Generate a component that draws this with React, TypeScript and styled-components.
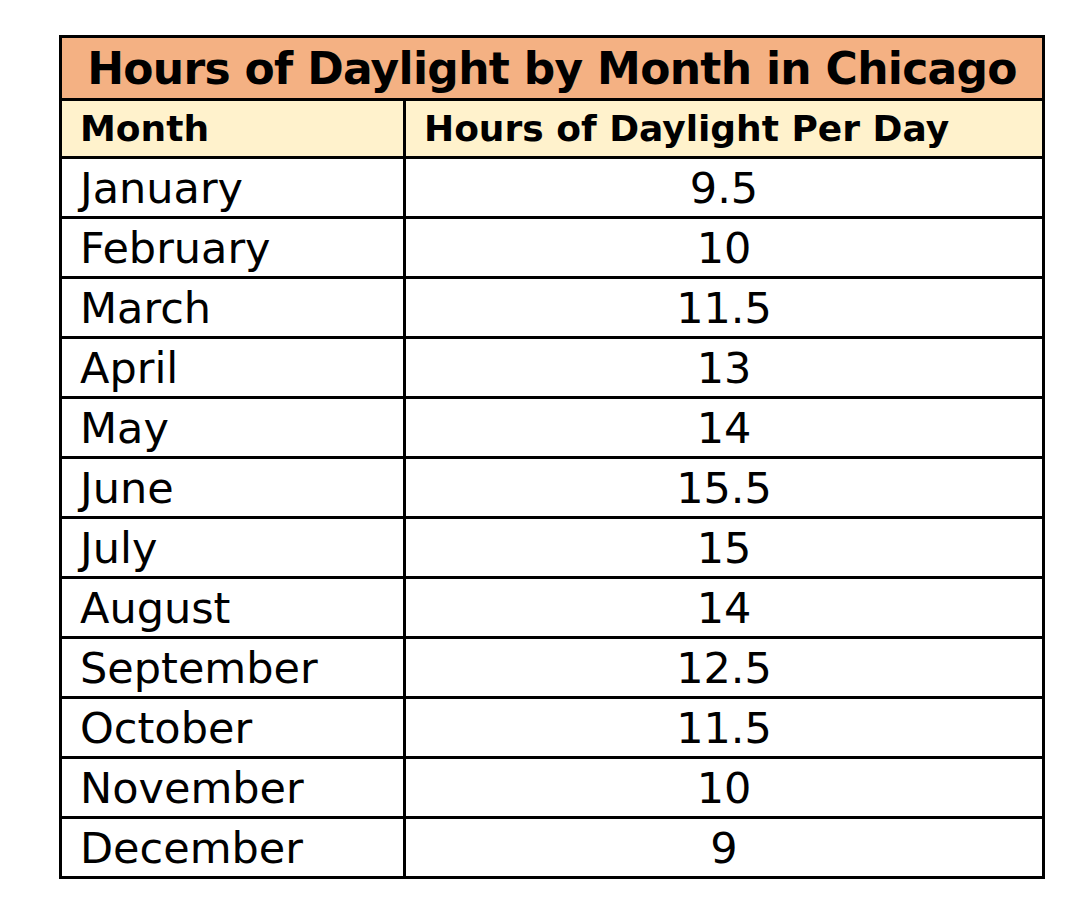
import styled, { createGlobalStyle } from "styled-components";

const GlobalStyle = createGlobalStyle`
  body {
    margin: 0;
    background: #ffffff;
    font-family: "DejaVu Sans", sans-serif;
    color: #000000;
  }
`;

const Styled_Page = styled.div`
  padding: 35px 0 0 59px;
`;

const Styled_Table = styled.table`
  border-collapse: collapse;
  width: 986px;
  table-layout: fixed;
  border: 3px solid #000;
`;

const Styled_TitleCell = styled.th`
  background-color: #f4b183;
  height: 60px;
  padding: 0;
  font-size: 44px;
  letter-spacing: -0.7px;
  font-weight: bold;
  text-align: center;
  border-bottom: 3px solid #000;
`;

const Styled_HeadCell = styled.th`
  background-color: #fff2cc;
  height: 55px;
  padding: 0 0 0 18px;
  font-size: 36px;
  font-weight: bold;
  text-align: left;
  border: 3px solid #000;
`;

const Styled_Cell = styled.td<{ $center?: boolean }>`
  height: 57px;
  padding: ${(p) => (p.$center ? "0" : "0 0 0 18px")};
  font-size: 43px;
  text-align: ${(p) => (p.$center ? "center" : "left")};
  border: 3px solid #000;
`;

const rows: [string, string][] = [
  ["January", "9.5"],
  ["February", "10"],
  ["March", "11.5"],
  ["April", "13"],
  ["May", "14"],
  ["June", "15.5"],
  ["July", "15"],
  ["August", "14"],
  ["September", "12.5"],
  ["October", "11.5"],
  ["November", "10"],
  ["December", "9"],
];

export default function App() {
  return (
    <Styled_Page>
      <GlobalStyle />
      <Styled_Table>
        <colgroup>
          <col style={{ width: 344 }} />
          <col />
        </colgroup>
        <thead>
          <tr>
            <Styled_TitleCell colSpan={2}>Hours of Daylight by Month in Chicago</Styled_TitleCell>
          </tr>
          <tr>
            <Styled_HeadCell>Month</Styled_HeadCell>
            <Styled_HeadCell>Hours of Daylight Per Day</Styled_HeadCell>
          </tr>
        </thead>
        <tbody>
          {rows.map(([month, hours]) => (
            <tr key={month}>
              <Styled_Cell>{month}</Styled_Cell>
              <Styled_Cell $center>{hours}</Styled_Cell>
            </tr>
          ))}
        </tbody>
      </Styled_Table>
    </Styled_Page>
  );
}
